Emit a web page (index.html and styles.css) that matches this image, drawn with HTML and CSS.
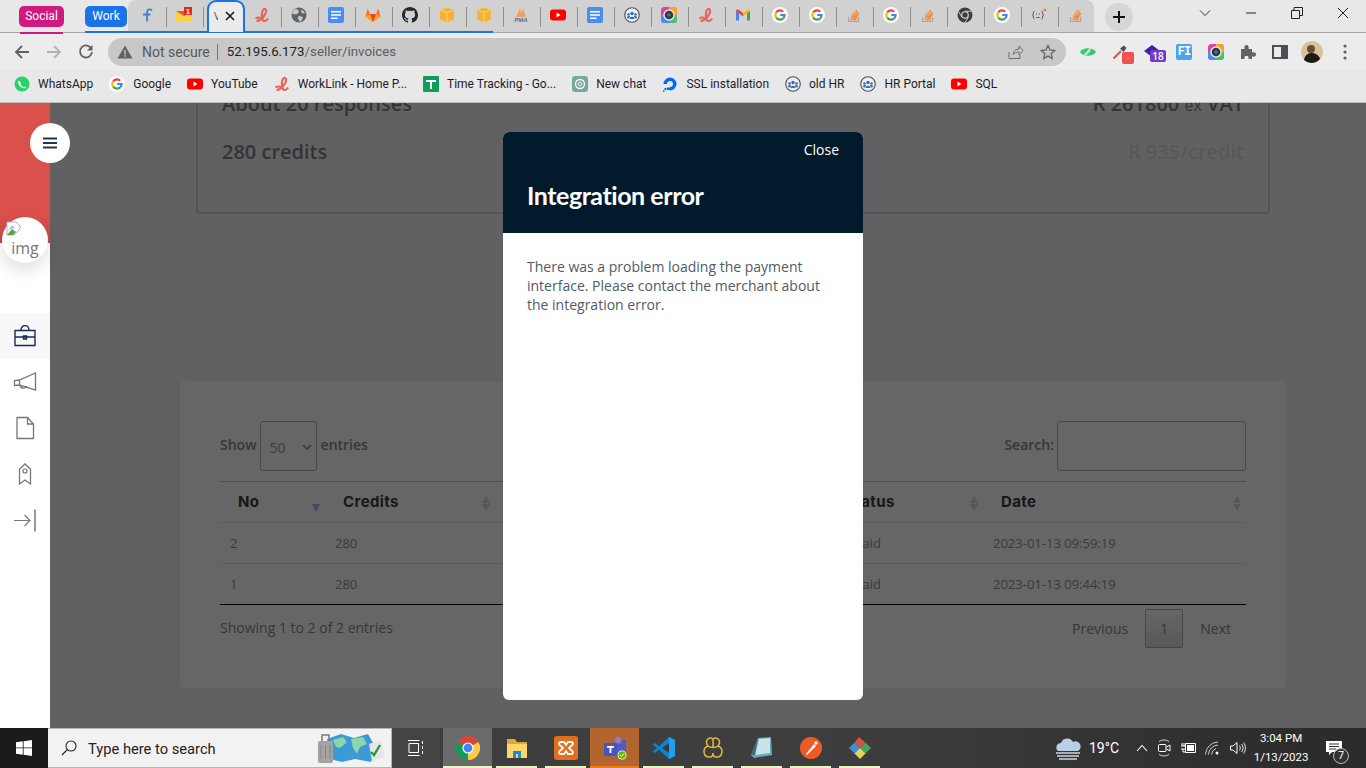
FILE: index.html
```html
<!DOCTYPE html>
<html lang="en">
<head>
  <meta charset="UTF-8" />
  <title>Seller invoices</title>
  <link rel="stylesheet" href="styles.css">
</head>
<body>
  <svg class="defs" width="0" height="0">
    <defs>
      <symbol id="g" viewBox="0 0 16 16">
        <circle cx="8" cy="8" r="8" fill="#fff"/>
        <g fill="none" stroke-width="2.2">
          <path d="M4.2 5.4A4.6 4.6 0 0 1 11.2 4.7" stroke="#ea4335"/>
          <path d="M4.2 5.4A4.6 4.6 0 0 0 4.2 10.6" stroke="#fbbc05"/>
          <path d="M4.2 10.6A4.6 4.6 0 0 0 11.4 11.2" stroke="#34a853"/>
          <path d="M11.4 11.2A4.6 4.6 0 0 0 12.6 8H8.2" stroke="#4285f4"/>
        </g>
      </symbol>
      <symbol id="wl" viewBox="0 0 16 16">
        <path d="M2.5 14C6 14 12.5 8 12 3.5 11.6 .8 8.6 1.5 8 5.5 7.4 10 8.5 14.5 11 14 12.5 13.7 13.5 12.5 14.2 11.5" fill="none" stroke="#e8645c" stroke-width="2.1"/>
        <path d="M1.5 11.5C3.5 10 5.5 10.3 7.5 11.5" fill="none" stroke="#e8645c" stroke-width="1.8"/>
      </symbol>
      <symbol id="doc" viewBox="0 0 16 16">
        <rect width="16" height="16" rx="2" fill="#4a8cf0"/>
        <path d="M3 4h10v1.6H3zM3 7.2h10v1.6H3zM3 10.4h6.5V12H3z" fill="#fff"/>
      </symbol>
      <symbol id="globe" viewBox="0 0 16 16">
        <circle cx="8" cy="8" r="7.5" fill="#5f6368"/>
        <path d="M5 1.5 8 4 7 6.5 4 7.5 1 6.5A7.5 7.5 0 0 1 5 1.5ZM8 9l4 1-1 3-2 2-1-2-1.5-2ZM11 2.5l3 3.5-2.5.5L10 5Z" fill="#c7c9cc"/>
      </symbol>
      <symbol id="gitlab" viewBox="0 0 16 16">
        <path d="M8 15 .5 9.5 2.7 1.5 5 7h6l2.3-5.5 2.2 8Z" fill="#fc6d26"/>
        <path d="M8 15 5 7h6Z" fill="#e24329"/>
        <path d="M8 15 .5 9.5 5 7ZM8 15l7.5-5.5L11 7Z" fill="#fca326"/>
      </symbol>
      <symbol id="github" viewBox="0 0 16 16">
        <path fill="#24292e" d="M8 0C3.58 0 0 3.58 0 8c0 3.54 2.29 6.53 5.47 7.59.4.07.55-.17.55-.38 0-.19-.01-.82-.01-1.49-2.01.37-2.53-.49-2.69-.94-.09-.23-.48-.94-.82-1.13-.28-.15-.68-.52-.01-.53.63-.01 1.08.58 1.23.82.72 1.21 1.87.87 2.33.66.07-.52.28-.87.51-1.07-1.78-.2-3.64-.89-3.64-3.95 0-.87.31-1.59.82-2.15-.08-.2-.36-1.02.08-2.12 0 0 .67-.21 2.2.82.64-.18 1.32-.27 2-.27.68 0 1.36.09 2 .27 1.53-1.04 2.2-.82 2.2-.82.44 1.1.16 1.92.08 2.12.51.56.82 1.27.82 2.15 0 3.07-1.87 3.75-3.65 3.95.29.25.54.73.54 1.48 0 1.07-.01 1.93-.01 2.2 0 .21.15.46.55.38A8.013 8.013 0 0016 8c0-4.42-3.58-8-8-8z"/>
      </symbol>
      <symbol id="box" viewBox="0 0 16 16">
        <path d="M8 .5 15 3v9.5L8 15.5 1 12.5V3Z" fill="#f5b335"/>
        <path d="M1 3l7 2.5L15 3M8 5.5v10" fill="none" stroke="#fbd98a" stroke-width=".8"/>
      </symbol>
      <symbol id="pma" viewBox="0 0 16 16">
        <path d="M3 10 7 1l1 5 2-5 3 9Z" fill="#f0a060"/>
        <text x="8" y="15" font-family="Liberation Sans" font-size="6" font-weight="700" font-style="italic" text-anchor="middle" fill="#5a6a9c">PMA</text>
      </symbol>
      <symbol id="yt" viewBox="0 0 16 16">
        <rect y="2.5" width="16" height="11" rx="3" fill="#f00"/>
        <path d="M6.5 5.5v5l4-2.5Z" fill="#fff"/>
      </symbol>
      <symbol id="hr" viewBox="0 0 16 16">
        <circle cx="8" cy="8" r="7.3" fill="#eceff3" stroke="#4a5260" stroke-width="1.1"/>
        <circle cx="8" cy="6.5" r="1.7" fill="#3b6ea8"/>
        <circle cx="4.5" cy="7.5" r="1.3" fill="#3b6ea8"/>
        <circle cx="11.5" cy="7.5" r="1.3" fill="#3b6ea8"/>
        <path d="M5.5 12c0-3 5-3 5 0ZM2.8 11c0-2 3-2.3 3.2-1.5L5 11.5ZM13.2 11c0-2-3-2.3-3.2-1.5l1 2Z" fill="#3b6ea8"/>
      </symbol>
      <symbol id="lens" viewBox="0 0 16 16">
        <rect width="16" height="16" rx="3.5" fill="#e040a0"/>
        <path d="M8 0h4.5A3.5 3.5 0 0 1 16 3.5V8H8Z" fill="#f5a623"/>
        <path d="M16 8v4.5a3.5 3.5 0 0 1-3.5 3.500H8V8Z" fill="#46c46c"/>
        <path d="M8 16H3.5A3.5 3.5 0 0 1 0 12.5V8h8Z" fill="#4a8cf0"/>
        <circle cx="8" cy="8" r="5.8" fill="#e8e8e8"/>
        <circle cx="8" cy="8" r="4.3" fill="#2d3a46"/>
        <circle cx="8" cy="8" r="1.8" fill="#5d7183"/>
      </symbol>
      <symbol id="gmail" viewBox="0 0 16 16">
        <path d="M1 13.5V4l3 2v7.5Z" fill="#4285f4"/>
        <path d="M12 13.5V6l3-2v9.5Z" fill="#34a853"/>
        <path d="M1 4c0-1.3 1.5-2 2.5-1.2L8 6.3v3L1 4Z" fill="#ea4335"/>
        <path d="M15 4c0-1.3-1.5-2-2.5-1.2L8 6.3v3L15 4Z" fill="#fbbc05"/>
        <path d="M4 6l4 3.3v-3L4 3.200Z" fill="#ea4335"/>
      </symbol>
      <symbol id="stack" viewBox="0 0 16 16">
        <path d="M2.5 10v4.5h10V10" fill="none" stroke="#a5a5a5" stroke-width="1.2"/>
        <path d="M4.5 12.8h6M4.6 10.800l6 .6M5 8.8l5.9 1.500M6 6.7l5.4 2.8M7.5 4.7l4.600 3.900M9.500 2.800l3.300 4.800" fill="none" stroke="#f48024" stroke-width="1.1"/>
      </symbol>
      <symbol id="chromebw" viewBox="0 0 16 16">
        <circle cx="8" cy="8" r="7.5" fill="#3c3f42"/>
        <circle cx="8" cy="8" r="3.8" fill="#d8d8d8"/>
        <circle cx="8" cy="8" r="2.7" fill="#3c3f42"/>
        <path d="M8 4.2h6.500M4.700 9.900 1.500 4.400M11.300 9.900 8 15.500" stroke="#d8d8d8" stroke-width=".9"/>
      </symbol>
      <symbol id="brackets" viewBox="0 0 16 16">
        <path d="M3.5 4C2 4 2.800 7.500 1.500 8 2.800 8.500 2 12 3.500 12M10.500 4C12 4 11.200 7.500 12.500 8 11.200 8.500 12 12 10.500 12" fill="none" stroke="#4a5068" stroke-width="1"/>
        <path d="M5 7h1M8 7h1M5.500 10.500h3" stroke="#4a5068" stroke-width="1"/>
        <circle cx="14" cy="3" r="1.500" fill="#f48024"/>
      </symbol>
      <symbol id="chrome" viewBox="0 0 24 24">
        <path d="M1.600 6A12 12 0 0 1 22.400 6L12 12Z" fill="#db4437"/>
        <path d="M1.600 6A12 12 0 0 0 12 24L12 12Z" fill="#0f9d58"/>
        <path d="M22.400 6A12 12 0 0 1 12 24L12 12Z" fill="#ffcd40"/>
        <circle cx="12" cy="12" r="5.600" fill="#fff"/>
        <circle cx="12" cy="12" r="4.400" fill="#4285f4"/>
      </symbol>
    </defs>
  </svg>

  <div class="tabstrip">
    <span class="chip chip-social">Social</span>
    <span class="chip chip-work">Work</span>
    <div class="tabs">
      <div class="tab">
        <svg class="ico" viewBox="0 0 16 16"><path d="M13 3.500C11 1.500 8 2 8 5.500V14.500M4 7.500h7.500" fill="none" stroke="#3f7fd0" stroke-width="1.800"/></svg>
      </div>
      <div class="tab">
        <svg class="ico" viewBox="0 0 16 16"><path d="M0 4h16v10H0Z" fill="#fbd146"/><path d="M0 4l8 5 8-5Z" fill="#e8553a"/><rect x="8" y="0" width="8" height="8" fill="#e02b20"/><text x="12" y="7" font-family="Liberation Sans" font-size="7" font-weight="700" text-anchor="middle" fill="#fff">1</text></svg>
      </div>
      <div class="tab tab-active">
        <span class="tab-title">V</span>
        <svg class="tab-close" viewBox="0 0 10 10"><path d="M1 1l8 8M9 1l-8 8" stroke="#111" stroke-width="1.500"/></svg>
      </div>
      <div class="tab"><svg class="ico"><use href="#wl"/></svg></div>
      <div class="tab"><svg class="ico"><use href="#globe"/></svg></div>
      <div class="tab"><svg class="ico"><use href="#doc"/></svg></div>
      <div class="tab"><svg class="ico"><use href="#gitlab"/></svg></div>
      <div class="tab"><svg class="ico"><use href="#github"/></svg></div>
      <div class="tab"><svg class="ico"><use href="#box"/></svg></div>
      <div class="tab"><svg class="ico"><use href="#box"/></svg></div>
      <div class="tab"><svg class="ico"><use href="#pma"/></svg></div>
      <div class="tab"><svg class="ico"><use href="#yt"/></svg></div>
      <div class="tab"><svg class="ico"><use href="#doc"/></svg></div>
      <div class="tab"><svg class="ico"><use href="#hr"/></svg></div>
      <div class="tab"><svg class="ico"><use href="#lens"/></svg></div>
      <div class="tab"><svg class="ico"><use href="#wl"/></svg></div>
      <div class="tab"><svg class="ico"><use href="#gmail"/></svg></div>
      <div class="tab"><svg class="ico"><use href="#g"/></svg></div>
      <div class="tab"><svg class="ico"><use href="#g"/></svg></div>
      <div class="tab"><svg class="ico"><use href="#stack"/></svg></div>
      <div class="tab"><svg class="ico"><use href="#g"/></svg></div>
      <div class="tab"><svg class="ico"><use href="#stack"/></svg></div>
      <div class="tab"><svg class="ico"><use href="#chromebw"/></svg></div>
      <div class="tab"><svg class="ico"><use href="#g"/></svg></div>
      <div class="tab"><svg class="ico"><use href="#brackets"/></svg></div>
      <div class="tab tab-last"><svg class="ico"><use href="#stack"/></svg></div>
    </div>
    <div class="newtab">
      <svg viewBox="0 0 12 12" width="12" height="12"><path d="M6 0v12M0 6h12" stroke="#111" stroke-width="2"/></svg>
    </div>
    <div class="winbtns">
      <svg viewBox="0 0 12 12" width="12" height="12"><path d="M1 3.500l5 5 5-5" fill="none" stroke="#333" stroke-width="1"/></svg>
      <svg viewBox="0 0 12 12" width="12" height="12"><path d="M1 6h10" stroke="#222" stroke-width="1"/></svg>
      <svg viewBox="0 0 12 12" width="12" height="12"><path d="M.5 3.500h8v8h-8ZM3 3.500V.5h8.500v8h-3" fill="none" stroke="#222" stroke-width="1"/></svg>
      <svg viewBox="0 0 12 12" width="12" height="12"><path d="M1 1l10 10M11 1L1 11" stroke="#222" stroke-width="1"/></svg>
    </div>
  </div>

  <div class="toolbar">
    <div class="navbtns">
      <svg viewBox="0 0 16 16" width="16" height="16"><path d="M15 8H2M8 2 2 8l6 6" fill="none" stroke="#5f6368" stroke-width="1.800"/></svg>
      <svg viewBox="0 0 16 16" width="16" height="16"><path d="M1 8h13M8 2l6 6-6 6" fill="none" stroke="#b0b2b5" stroke-width="1.800"/></svg>
      <svg viewBox="0 0 16 16" width="16" height="16"><path d="M13.500 5A6 6 0 1 0 14 8" fill="none" stroke="#5f6368" stroke-width="1.800"/><path d="M14.500 1v5.500H9Z" fill="#5f6368"/></svg>
    </div>
    <div class="omnibox">
      <svg class="warn" viewBox="0 0 16 16" width="16" height="16"><path d="M8 1.500 15.500 14.500H.5Z" fill="#5f6368"/><path d="M7.300 6h1.400v4.500H7.300zM7.300 11.300h1.400v1.400H7.300z" fill="#c8c8c8"/></svg>
      <span class="notsecure">Not secure</span>
      <span class="omni-sep"></span>
      <span class="url">52.195.6.173<span class="url-path">/seller/invoices</span></span>
      <svg class="omni-share" viewBox="0 0 16 16" width="16" height="16"><path d="M1 8v6.500h11V11M5 10.500C5.500 7 8 5 11 5V2l4 4.500L11 11V8C8.500 8 6.500 9 5 10.500Z" fill="none" stroke="#6a6d70" stroke-width="1"/></svg>
      <svg class="omni-star" viewBox="0 0 16 16" width="16" height="16"><path d="M8 1.500 10 6l4.800.500L11.200 9.800 12.200 14.500 8 12.100 3.800 14.500 4.800 9.800 1.200 6.500 6 6Z" fill="none" stroke="#5f6368" stroke-width="1.300"/></svg>
    </div>
    <div class="exts">
      <svg viewBox="0 0 16 16" width="16" height="16"><path d="M0 8C3 3 13 3 16 8 13 13 3 13 0 8Z" fill="#2fd06a"/><path d="M4 12 11 3.500" stroke="#e8e8e8" stroke-width="1.200"/><path d="M5 8.500 7 10.500 10.500 6" fill="none" stroke="#e8e8e8" stroke-width="1"/></svg>
      <span class="ext-dropper">
        <svg viewBox="0 0 16 16" width="16" height="16"><path d="M1.500 14.500 9 7" stroke="#d05a55" stroke-width="2.200"/><path d="M8 4.500 12 1.500 14.500 4 11.500 8Z" fill="#4a4f55"/></svg>
        <span class="ext-badge">.</span>
      </span>
      <span class="ext-cap">
        <svg viewBox="0 0 16 16" width="16" height="16"><path d="M0 7 8 1l8 6-8 6Z" fill="#4a1aa8"/></svg>
        <span class="ext-count">18</span>
      </span>
      <span class="ext-fi">F<span>I</span></span>
      <svg class="ico"><use href="#lens"/></svg>
      <svg viewBox="0 0 16 16" width="16" height="16"><path d="M1 5h3.500C4 2 5 1 6.500 1S9 2 8.500 5H12v3.500c3-.5 4 .5 4 2s-1 2.500-4 2V15H8.500c.5-2.500-.5-3-2-3s-2.500.5-2 3H1Z" fill="#5f6368"/></svg>
      <svg viewBox="0 0 16 16" width="16" height="16"><path d="M1 2h14v12H1Z" fill="none" stroke="#4a4f55" stroke-width="2"/><path d="M9 2h6v12H9Z" fill="#4a4f55"/></svg>
      <svg class="ext-avatar" viewBox="0 0 22 22" width="22" height="22"><circle cx="11" cy="11" r="11" fill="#d8c49a"/><circle cx="10" cy="8" r="4" fill="#6b4a32"/><path d="M3 19c1-6 5-7 8-7s7 2 8 6a11 11 0 0 1-16 1Z" fill="#1d1a18"/></svg>
      <svg class="ext-dots" viewBox="0 0 4 16" width="4" height="16"><circle cx="2" cy="2" r="1.600" fill="#5f6368"/><circle cx="2" cy="8" r="1.600" fill="#5f6368"/><circle cx="2" cy="14" r="1.600" fill="#5f6368"/></svg>
    </div>
  </div>

  <div class="bookmarks">
    <a class="bm"><svg class="ico" viewBox="0 0 16 16"><circle cx="8" cy="8" r="7.500" fill="#25d366"/><path d="M5 4.500 7 7 6.500 8.500C7.500 10 8.500 10.800 10 11L11.500 10.500 11.800 12C9 13.500 3.500 9.500 4 5.500Z" fill="#fff"/></svg>WhatsApp</a>
    <a class="bm"><svg class="ico"><use href="#g"/></svg>Google</a>
    <a class="bm"><svg class="ico"><use href="#yt"/></svg>YouTube</a>
    <a class="bm"><svg class="ico"><use href="#wl"/></svg>WorkLink - Home P...</a>
    <a class="bm"><svg class="ico" viewBox="0 0 16 16"><rect width="16" height="16" rx="1" fill="#0f9d58"/><path d="M3 4h10v2H9v7H7V6H3z" fill="#fff"/></svg>Time Tracking - Go...</a>
    <a class="bm"><svg class="ico" viewBox="0 0 16 16"><rect width="16" height="16" rx="3" fill="#74aa9c"/><circle cx="8" cy="8" r="4.500" fill="none" stroke="#fff" stroke-width="1.300"/><circle cx="8" cy="8" r="1.800" fill="none" stroke="#fff" stroke-width=".8"/></svg>New chat</a>
    <a class="bm"><svg class="ico" viewBox="0 0 16 16"><path d="M8 14.500A6.500 6.500 0 1 0 1.500 8H5A3 3 0 1 1 8 11Z" fill="#0069ff"/><path d="M5 11.500h3V14H5zM2.500 12h2v2h-2zM1 14.200h1.500v1.500H1z" fill="#0069ff"/></svg>SSL installation</a>
    <a class="bm"><svg class="ico"><use href="#hr"/></svg>old HR</a>
    <a class="bm"><svg class="ico"><use href="#hr"/></svg>HR Portal</a>
    <a class="bm"><svg class="ico"><use href="#yt"/></svg>SQL</a>
  </div>

  <div class="viewport">
    <aside class="sidebar">
      <div class="side-red"></div>
      <button class="burger">
        <svg viewBox="0 0 14 12" width="14" height="12"><path d="M0 1.500h14M0 6h14M0 10.500h14" stroke="#243648" stroke-width="2"/></svg>
      </button>
      <div class="avatar">
        <svg class="broken" viewBox="0 0 16 16" width="16" height="16"><path d="M1 1h9l4 4v3L8 14H1Z" fill="#fff" stroke="#a9b4c2" stroke-width="1"/><path d="M1 14 6 8l4 3-3 3Z" fill="#5aa73c"/><path d="M2 9 6 4l3 3" fill="#a8c7f0"/></svg>
        <span>img</span>
      </div>
      <nav class="side-nav">
        <a class="side-item side-active">
          <svg viewBox="0 0 24 24" width="24" height="24"><path d="M2 6.500h20v15H2ZM2 13h20M8 6.500C8 0 16 0 16 6.500M10.500 12h3v3h-3Z" fill="none" stroke="#1a2a55" stroke-width="1.400"/></svg>
        </a>
        <a class="side-item">
          <svg viewBox="0 0 24 24" width="24" height="24"><path d="M1.500 10.500v5l5-.5 16 5V3L6.500 10ZM6.500 10v5M7 15.500c1 3.500 6 3.500 6.500.5" fill="none" stroke="#777" stroke-width="1.300"/></svg>
        </a>
        <a class="side-item">
          <svg viewBox="0 0 24 24" width="24" height="24"><path d="M4 1.500h10.500l6 6.500v14.500H4ZM14.500 1.500V8h6" fill="none" stroke="#777" stroke-width="1.300"/></svg>
        </a>
        <a class="side-item">
          <svg viewBox="0 0 24 24" width="24" height="24"><path d="M6.500 22V7L12 2l5.500 5v15L12 18Z" fill="none" stroke="#777" stroke-width="1.300"/><circle cx="12" cy="9" r="2" fill="none" stroke="#777" stroke-width="1.200"/></svg>
        </a>
        <a class="side-item">
          <svg viewBox="0 0 24 24" width="24" height="24"><path d="M1 12.500h16M11.500 7l5.500 5.500-5.500 5.500" fill="none" stroke="#777" stroke-width="1.200"/><path d="M22 1.500v22" stroke="#777" stroke-width="1.500"/></svg>
        </a>
      </nav>
    </aside>

    <main class="page">
      <section class="plan-card">
        <div class="plan-row">
          <span>About 20 responses</span>
          <span>R 261800 <small>ex</small> VAT</span>
        </div>
        <div class="plan-row">
          <span>280 credits</span>
          <span class="plan-price">R 935/credit</span>
        </div>
      </section>

      <section class="invoices">
        <div class="dt-top">
          <label class="dt-len">Show
            <span class="dt-select">50
              <svg viewBox="0 0 10 6" width="10" height="6"><path d="M1 1l4 4 4-4" fill="none" stroke="#909090" stroke-width="1.500"/></svg>
            </span>
            entries</label>
          <label class="dt-search">Search: <span class="dt-input"></span></label>
        </div>
        <table class="dt">
          <colgroup>
            <col class="c-no"><col class="c-credits"><col class="c-hidden"><col class="c-status"><col class="c-date">
          </colgroup>
          <thead>
            <tr>
              <th class="sort-desc">No</th>
              <th class="sort">Credits</th>
              <th></th>
              <th class="sort">Status</th>
              <th class="sort">Date</th>
            </tr>
          </thead>
          <tbody>
            <tr><td>2</td><td>280</td><td></td><td>Unpaid</td><td>2023-01-13 09:59:19</td></tr>
            <tr><td>1</td><td>280</td><td></td><td>Unpaid</td><td>2023-01-13 09:44:19</td></tr>
          </tbody>
        </table>
        <div class="dt-bottom">
          <span class="dt-info">Showing 1 to 2 of 2 entries</span>
          <div class="dt-pages">
            <span>Previous</span>
            <span class="dt-current">1</span>
            <span>Next</span>
          </div>
        </div>
      </section>
    </main>

    <div class="overlay">
      <div class="modal">
        <div class="modal-head">
          <a class="modal-close">Close</a>
          <h2>Integration error</h2>
        </div>
        <div class="modal-body">
          There was a problem loading the payment interface. Please contact the merchant about the integration error.
        </div>
      </div>
    </div>
  </div>

  <div class="taskbar">
    <div class="start">
      <svg viewBox="0 0 16 16" width="16" height="16"><path d="M0 2.300 6.800 1.300V7.500H0ZM7.600 1.200 16 0V7.500H7.600ZM0 8.300H6.800V14.700L0 13.700ZM7.600 8.300H16V16L7.600 14.800Z" fill="#fff"/></svg>
    </div>
    <div class="search">
      <svg viewBox="0 0 16 16" width="16" height="16"><circle cx="10" cy="6" r="5" fill="none" stroke="#222" stroke-width="1.100"/><path d="M6.300 9.700 1 15" stroke="#222" stroke-width="1.200"/></svg>
      <span class="search-text">Type here to search</span>
      <svg class="search-pic" viewBox="0 0 68 32" width="68" height="32">
        <path d="M10 7 24 2l13 4 14-4 8 14-5 14-16-3-13 3-12-3Z" fill="#3b9bd6"/>
        <path d="M16 8l10-3 4 5-7 6-4-1ZM34 7l12-2 4 7-7 3-3 7-4-6Z" fill="#8ed6a8"/>
        <rect x="1" y="9" width="15" height="22" rx="2" fill="#a3a3a3"/>
        <path d="M5 9V3h7v6" fill="none" stroke="#777" stroke-width="1.500"/>
        <path d="M4 13v14M8.500 13v14M13 13v14" stroke="#868686" stroke-width="1"/>
        <path d="M52 12l12-4 4 17-13 4Z" fill="#e7e5ef"/>
        <path d="M54 20l3 3 6-10" fill="none" stroke="#2d9a2d" stroke-width="2.400"/>
      </svg>
    </div>
    <div class="taskview">
      <svg viewBox="0 0 16 16" width="16" height="16"><path d="M1 3.500h9.500v9H1ZM0 .5h11.500M0 15.500h11.500M14.500 1v3M14.500 6v3M14.500 11v3" fill="none" stroke="#fff" stroke-width="1"/></svg>
    </div>
    <div class="apps">
      <div class="app app-on app-hover"><svg viewBox="0 0 24 24" width="24" height="24"><use href="#chrome"/></svg></div>
      <div class="app app-on">
        <svg viewBox="0 0 24 24" width="24" height="24"><path d="M2 3h8l2 3h10v3H2Z" fill="#e0a830"/><path d="M2 8h20v14H2Z" fill="#fbd66a"/><path d="M8 22v-7h8v7h-3v-4h-2v4Z" fill="#1b8ad4"/></svg>
      </div>
      <div class="app app-on">
        <svg viewBox="0 0 24 24" width="24" height="24"><rect width="24" height="24" rx="3" fill="#e0701e"/><path d="M7 6h3l2 3 2-3h3c2.500 0 2.500 3 0 4l-2 2 2 2c2.500 1 2.500 4 0 4h-3l-2-3-2 3H7c-2.500 0-2.500-3 0-4l2-2-2-2C4.500 9 4.500 6 7 6Z" fill="none" stroke="#fff" stroke-width="1.800"/></svg>
      </div>
      <div class="app app-teams">
        <svg viewBox="0 0 24 24" width="24" height="24"><circle cx="15" cy="4" r="3" fill="#7b83eb"/><circle cx="21" cy="6" r="2.300" fill="#5059c9"/><path d="M11 8h12v9c0 4-4 6-7 5-3-1-5-3-5-6Z" fill="#5059c9"/><rect x="1" y="7" width="13" height="13" rx="1" fill="#4b53bc"/><path d="M4 10h7v1.800H8.400V17H6.600v-5.200H4Z" fill="#fff"/><circle cx="19" cy="19" r="4.500" fill="#fff"/><circle cx="19" cy="19" r="3.700" fill="#6bb700"/><path d="M17 19l1.500 1.500 2.500-3" fill="none" stroke="#fff" stroke-width="1"/></svg>
      </div>
      <div class="app app-on">
        <svg viewBox="0 0 24 24" width="24" height="24"><path d="M17 1 23 4V20L17 23 7 13.500 3 17 .5 15.500 5 12 .5 8.500 3 7 7 10.500Z" fill="#0a84d6"/><path d="M17 7 10 12 17 17Z" fill="#3b3b3b"/><path d="M17 1 23 4V20L17 23Z" fill="#1ea1f1"/></svg>
      </div>
      <div class="app app-on">
        <svg viewBox="0 0 24 24" width="24" height="24"><path d="M12 3C8 0 3 5 7 10 1 12 2 22 9 21 12 21 12 17 12 17 12 17 12 21 15 21 22 22 23 12 17 10 21 5 16 0 12 3ZM12 3V12M7 10C9 12 15 12 17 10" fill="none" stroke="#e0b93e" stroke-width="1.500"/></svg>
      </div>
      <div class="app app-on">
        <svg viewBox="0 0 24 24" width="24" height="24"><path d="M8 2 21 1 22 19 4 22 1 19Z" fill="#6da9b8"/><path d="M9 3 20 2 20 17 5 19Z" fill="#c6e4ea"/><path d="M1 19 8 2 5 19Z" fill="#3c6b78"/></svg>
      </div>
      <div class="app app-on">
        <svg viewBox="0 0 24 24" width="24" height="24"><circle cx="12" cy="12" r="11" fill="#ef5b25"/><path d="M7 18 15 8l2 2-9 9ZM15 7l2-2 2 2-2 2Z" fill="#fff"/></svg>
      </div>
      <div class="app app-on">
        <svg viewBox="0 0 24 24" width="24" height="24"><path d="M12 12 6.500 6.500 1 12l5.500 5.500Z" fill="#3d8fd6"/><path d="M12 12 6.500 6.500 11 1l6 5.500Z" fill="#d0544a"/><path d="M12 12l5.500-5.500L23 12l-5.500 5.500Z" fill="#45a55a"/><path d="M12 12 6.500 17.500 12 23l5.500-5.500Z" fill="#e8d25a"/></svg>
      </div>
    </div>
    <div class="tray">
      <svg class="tray-cloud" viewBox="0 0 26 24" width="26" height="24"><path d="M3 15a4.500 4.500 0 0 1 3-8 6.500 6.500 0 0 1 12-1 5 5 0 0 1 5 9Z" fill="#b9cfe6"/><path d="M1 17h24M2 20h22M4 23h18" stroke="#cfd8e0" stroke-width="1.500"/></svg>
      <span class="tray-temp">19°C</span>
      <svg class="tray-chev" viewBox="0 0 12 8" width="12" height="8"><path d="M1 7l5-5.500L11 7" fill="none" stroke="#fff" stroke-width="1.100"/></svg>
      <svg class="tray-ico" viewBox="0 0 14 18" width="14" height="18"><path d="M2 2.500C5 .5 9 .5 12 2.500M2 15.500c3 2 7 2 10 0" fill="none" stroke="#fff" stroke-width=".8"/><rect x="1.500" y="5.500" width="7.500" height="7" rx="1" fill="none" stroke="#fff"/><path d="M9.500 8 13 6v6L9.500 10" fill="none" stroke="#fff"/></svg>
      <svg class="tray-ico" viewBox="0 0 16 14" width="16" height="14"><path d="M5.500 2.500H15.500V11.500H5.500Z" fill="none" stroke="#fff"/><path d="M7 4h7v6H7Z" fill="#fff"/><path d="M1 5h4M1 8h4M3 8v3h3M2 2v3M4 2v3" fill="none" stroke="#fff"/></svg>
      <svg class="tray-ico" viewBox="0 0 16 14" width="16" height="14"><path d="M.5 13.500A13 13 0 0 1 13 1M3.500 13.500A10 10 0 0 1 13 4M6.500 13.500A7 7 0 0 1 11 7.500" fill="none" stroke="#ccc" stroke-width="1"/><circle cx="12" cy="12" r="1.500" fill="#fff"/></svg>
      <svg class="tray-ico" viewBox="0 0 16 14" width="16" height="14"><path d="M.5 5H3L7 1.500v11L3 9H.5Z" fill="none" stroke="#fff"/><path d="M9.500 4.500c1 1.500 1 3.500 0 5M11.500 3c2 2 2 6 0 8M13.500 1.500c2.500 3 2.500 8 0 11" fill="none" stroke="#fff" stroke-width=".9"/></svg>
      <div class="clock"><span>3:04 PM</span><span>1/13/2023</span></div>
      <div class="notif">
        <svg viewBox="0 0 16 14" width="16" height="14"><path d="M0 0h16v11H6l-3 3v-3H0Z" fill="#fff"/><path d="M3 3h10M3 5.500h10M3 8h7" stroke="#333"/></svg>
        <span class="notif-count">7</span>
      </div>
    </div>
  </div>
</body>
</html>
```

FILE: styles.css
```css
* {
  box-sizing: border-box;
}
html, body {
  margin: 0;
  height: 100%;
}
body {
  width: 1366px;
  height: 768px;
  overflow: hidden;
  display: flex;
  flex-direction: column;
  font-family: 'Open Sans', sans-serif;
  background: #f3f3f8;
}
.defs {
  position: absolute;
}
.ico {
  width: 16px;
  height: 16px;
  flex: none;
}

/* tab strip */
.tabstrip {
  height: 33px;
  flex: none;
  display: flex;
  align-items: stretch;
  background: #e8e8e8;
  border-bottom: 1px solid #a6a6a6;
  padding-left: 19px;
  position: relative;
}
.chip {
  height: 21px;
  margin-top: 6px;
  border-radius: 5px;
  color: #fff;
  font-family: Roboto, sans-serif;
  font-size: 12px;
  line-height: 21px;
  text-align: center;
  position: relative;
}
.chip-social {
  width: 45px;
  background: #d0187f;
}
.chip-social::after {
  content: "";
  position: absolute;
  left: 1px;
  right: 1px;
  top: 26px;
  height: 2px;
  background: #d0187f;
}
.chip-work {
  width: 42px;
  margin-left: 21px;
  background: #1a73e8;
}
.chip-work::after {
  content: "";
  position: absolute;
  left: 0;
  top: 25px;
  width: 408px;
  height: 2px;
  background: #1a73e8;
  z-index: 2;
}
.tabs {
  display: flex;
  margin-left: 1px;
  background: #d1d1d1;
  border-radius: 8px 8px 0 0;
}
.tab {
  width: 37px;
  height: 32px;
  display: flex;
  align-items: center;
  justify-content: center;
  padding-bottom: 3px;
  position: relative;
  border-radius: 8px 8px 0 0;
}
.tab::after {
  content: "";
  position: absolute;
  right: -2px;
  top: 7px;
  height: 20px;
  width: 1px;
  background: #8f8f8f;
}
.tab-active {
  width: 38px;
  margin: 0 -2px 0 5px;
  background: #ebebeb;
  border: 2px solid #1a73e8;
  border-bottom: none;
  border-radius: 9px 9px 0 0;
  z-index: 3;
  padding: 0 0 3px 5px;
  justify-content: flex-start;
  gap: 7px;
}
.tab-active::after,
.tab-last::after {
  display: none;
}
.tab-title {
  width: 4px;
  overflow: hidden;
  font-size: 11px;
  color: #555;
}
.tab-close {
  width: 10px;
  height: 10px;
}
.newtab {
  width: 28px;
  height: 28px;
  margin: 3px 0 0 11px;
  border-radius: 50%;
  background: #d6d6d6;
  display: flex;
  align-items: center;
  justify-content: center;
}
.winbtns {
  margin-left: 66px;
  display: flex;
  align-items: center;
  gap: 34px;
  padding-bottom: 6px;
}

/* toolbar */
.toolbar {
  height: 37px;
  flex: none;
  display: flex;
  align-items: center;
  background: #ececec;
}
.navbtns {
  width: 108px;
  padding-left: 14px;
  display: flex;
  gap: 16px;
}
.omnibox {
  width: 958px;
  height: 28px;
  border-radius: 14px;
  background: #c8c8c8;
  display: flex;
  align-items: center;
  padding-left: 9px;
  font-family: Roboto, sans-serif;
  font-size: 14px;
}
.notsecure {
  margin-left: 9px;
  color: #55595e;
}
.omni-sep {
  width: 1px;
  height: 16px;
  background: #777;
  margin: 0 9px 0 7px;
}
.url {
  color: #222;
  font-size: 13.3px;
}
.url-path {
  color: #5a5d60;
}
.omni-share {
  margin-left: auto;
}
.omni-star {
  margin: 0 10px 0 16px;
}
.exts {
  flex: 1;
  display: flex;
  align-items: center;
  padding-left: 14px;
  gap: 16px;
}
.ext-dropper,
.ext-cap {
  position: relative;
  display: flex;
}
.ext-badge {
  position: absolute;
  left: 10px;
  top: 8px;
  width: 12px;
  height: 12px;
  border-radius: 2px;
  background: #f05050;
  color: #fff;
  font-size: 8px;
  line-height: 8px;
  text-align: center;
}
.ext-count {
  position: absolute;
  left: 6px;
  top: 6px;
  width: 16px;
  height: 12px;
  border-radius: 2px;
  background: #6c3cc4;
  color: #fff;
  font-size: 10px;
  font-weight: 600;
  line-height: 12px;
  text-align: center;
}
.ext-fi {
  width: 16px;
  height: 16px;
  background: #49a6e8;
  border-radius: 2px;
  color: #fff;
  font-family: 'Liberation Mono', monospace;
  font-size: 12px;
  font-weight: 700;
  line-height: 16px;
  white-space: nowrap;
  overflow: hidden;
  text-align: center;
  letter-spacing: -1px;
}
.ext-avatar {
  margin-left: -3px;
}
.ext-dots {
  margin-left: 4px;
}

/* bookmarks */
.bookmarks {
  height: 33px;
  flex: none;
  display: flex;
  align-items: center;
  gap: 16px;
  padding: 0 0 5px 14px;
  background: #e8e8e8;
  border-bottom: 1px solid #bdbdbd;
  font-family: Roboto, sans-serif;
  font-size: 12px;
  color: #1d1d2a;
}
.bm {
  display: flex;
  align-items: center;
  gap: 8px;
  white-space: nowrap;
}

/* page area */
.viewport {
  flex: 1;
  min-height: 0;
  position: relative;
  overflow: hidden;
  display: flex;
}
.sidebar {
  width: 50px;
  flex: none;
  background: #fff;
  position: relative;
  z-index: 5;
}
.side-red {
  height: 140px;
  background: linear-gradient(#d9504c 80%, #c84a47);
}
.burger {
  position: absolute;
  left: 30px;
  top: 20px;
  width: 40px;
  height: 40px;
  padding: 0;
  border: none;
  border-radius: 50%;
  background: #fff;
  display: flex;
  align-items: center;
  justify-content: center;
}
.avatar {
  position: absolute;
  left: 2px;
  top: 114px;
  width: 46px;
  height: 46px;
  border-radius: 50%;
  background: #fff;
  box-shadow: 0 8px 16px rgba(0,0,0,0.12);
  font-size: 16px;
  line-height: 18px;
  color: #777;
  text-align: center;
  padding-top: 9px;
}
.broken {
  position: absolute;
  left: 4px;
  top: 4px;
}
.avatar span {
  position: relative;
  top: 13px;
}
.side-nav {
  margin-top: 70px;
  display: flex;
  flex-direction: column;
}
.side-item {
  height: 46px;
  display: flex;
  align-items: center;
  justify-content: center;
}
.side-active {
  background: #f8f8f8;
}

.page {
  flex: 1;
  min-width: 0;
  margin-top: -43px;
  padding: 0 80px 0 130px;
  color: #8a8a8a;
  font-size: 14px;
}
.plan-card {
  margin: 0 16px;
  height: 154px;
  padding: 17px 24px 0;
  border: 2px solid #d2d2d2;
  border-radius: 4px;
  font-size: 20px;
  font-weight: 600;
  color: #828282;
}
.plan-row {
  height: 48px;
  display: flex;
  align-items: center;
  justify-content: space-between;
}
.plan-row small {
  font-size: 16px;
  font-weight: 400;
}
.plan-price {
  color: #dcdcdc;
}
.invoices {
  margin-top: 167px;
  height: 307px;
  padding: 40px;
  background: #fff;
  border-radius: 4px;
  box-shadow: 0 0 12px rgba(0,0,0,0.04);
}
.dt-top {
  height: 50px;
  display: flex;
  justify-content: space-between;
  font-weight: 600;
}
.dt-len,
.dt-search {
  display: flex;
  align-items: center;
  gap: 3px;
  height: 50px;
  padding-bottom: 3px;
}
.dt-select {
  width: 57px;
  height: 50px;
  margin: 0 1px -3px 0;
  border: 1px solid #b4b4b4;
  border-radius: 3px;
  display: flex;
  align-items: center;
  justify-content: space-between;
  padding: 2px 4px 0 9px;
  font-weight: 400;
  color: #999;
}
.dt-input {
  width: 189px;
  height: 50px;
  margin-bottom: -3px;
  border: 1px solid #b4b4b4;
  border-radius: 3px;
}
.dt {
  width: 100%;
  margin-top: 10px;
  border-collapse: collapse;
  table-layout: fixed;
}
.c-no { width: 105px; }
.c-credits { width: 170px; }
.c-hidden { width: 332px; }
.c-status { width: 156px; }
.dt th {
  height: 41px;
  padding: 0 10px 2px 18px;
  border-top: 1px solid #c4c4c4;
  border-bottom: 1px solid #e8e8e8;
  text-align: left;
  font-family: Inter, sans-serif;
  font-size: 15px;
  font-weight: 700;
  letter-spacing: 0.4px;
  color: #3c3c3c;
  position: relative;
}
.dt th.sort::before,
.dt th.sort::after {
  content: "";
  position: absolute;
  right: 5px;
  border-left: 4px solid transparent;
  border-right: 4px solid transparent;
}
.dt th.sort::before {
  top: 14px;
  border-bottom: 7px solid #d8d8d8;
}
.dt th.sort::after {
  top: 22px;
  border-top: 7px solid #d8d8d8;
}
.dt th.sort-desc::after {
  content: "";
  position: absolute;
  right: 5px;
  top: 22px;
  border-left: 4px solid transparent;
  border-right: 4px solid transparent;
  border-top: 8px solid #b0b0ff;
}
.dt td {
  height: 41px;
  padding: 0 10px;
  border-bottom: 1px solid #e8e8e8;
  font-size: 13px;
  color: #929292;
}
.dt tbody tr:last-child td {
  border-bottom: 1px solid #000;
}
.dt-bottom {
  display: flex;
  justify-content: space-between;
  align-items: flex-start;
  padding-top: 4px;
}
.dt-info {
  margin-top: 9px;
}
.dt-pages {
  display: flex;
  align-items: center;
  gap: 17px;
  padding-right: 15px;
}
.dt-current {
  width: 38px;
  height: 39px;
  border: 1px solid #b0b0b0;
  border-radius: 2px;
  background: linear-gradient(#fff, #dcdcdc);
  text-align: center;
  line-height: 37px;
}

.overlay {
  position: absolute;
  inset: 0;
  z-index: 4;
  background: rgba(0,0,0,0.6);
  display: flex;
  align-items: center;
  justify-content: center;
}
.modal {
  width: 360px;
  height: 568px;
  background: #fff;
  border-radius: 6px;
  overflow: hidden;
}
.modal-head {
  height: 101px;
  background: #021b2c;
  padding: 8px 24px 0;
  color: #fff;
}
.modal-close {
  display: block;
  text-align: right;
  font-size: 14px;
  line-height: 19px;
}
.modal-head h2 {
  margin: 18px 0 0;
  font-family: Lato, sans-serif;
  font-size: 25px;
  font-weight: 700;
  line-height: 36px;
  letter-spacing: -0.45px;
}
.modal-body {
  padding: 24px 24px;
  font-size: 14px;
  line-height: 19px;
  color: #4f5b66;
}

/* windows taskbar */
.taskbar {
  height: 40px;
  flex: none;
  display: flex;
  background: linear-gradient(90deg, #3e3e3e 60%, #2a2a2a);
  color: #fff;
}
.start {
  width: 48px;
  background: #1b1b1b;
  display: flex;
  align-items: center;
  justify-content: center;
}
.search {
  width: 344px;
  background: #f2f2f2;
  border: 1px solid #b5b5b5;
  border-width: 1px 1px 1px 0;
  display: flex;
  align-items: center;
  padding-left: 13px;
  font-family: Roboto, sans-serif;
  font-size: 14.7px;
  color: #222;
}
.search-text {
  margin: 1px 0 0 11px;
}
.search-pic {
  margin-left: auto;
  margin-right: 6px;
}
.taskview {
  width: 48px;
  background: #444;
  display: flex;
  align-items: center;
  justify-content: center;
}
.apps {
  display: flex;
  margin-left: 3px;
}
.app {
  width: 49px;
  display: flex;
  align-items: center;
  justify-content: center;
  position: relative;
}
.app-on::after,
.app-teams::after {
  content: "";
  position: absolute;
  left: 4px;
  right: 4px;
  bottom: 0;
  height: 2px;
  background: #e9f5c4;
}
.app-hover {
  background: #6b6b6b;
}
.app-hover::after {
  left: 0;
  right: 0;
}
.app-teams {
  background: #b3652f;
}
.app-teams::after {
  left: 0;
  right: 0;
  background: #f07a1c;
}
.tray {
  flex: 1;
  display: flex;
  align-items: center;
  padding-left: 171px;
  font-family: Roboto, sans-serif;
  font-size: 13px;
}
.tray-temp {
  margin-left: 8px;
  font-size: 14px;
}
.tray-chev {
  margin-left: 17px;
}
.tray-ico {
  margin-left: 9px;
}
.clock {
  width: 66px;
  margin-left: 2px;
  display: flex;
  flex-direction: column;
  align-items: center;
  font-size: 11.5px;
  line-height: 19px;
}
.notif {
  margin-left: 12px;
  position: relative;
  display: flex;
}
.notif-count {
  position: absolute;
  left: 7px;
  top: 7px;
  width: 16px;
  height: 16px;
  border: 1px solid #bbb;
  border-radius: 50%;
  background: #333;
  font-size: 11px;
  line-height: 14px;
  text-align: center;
}
```
